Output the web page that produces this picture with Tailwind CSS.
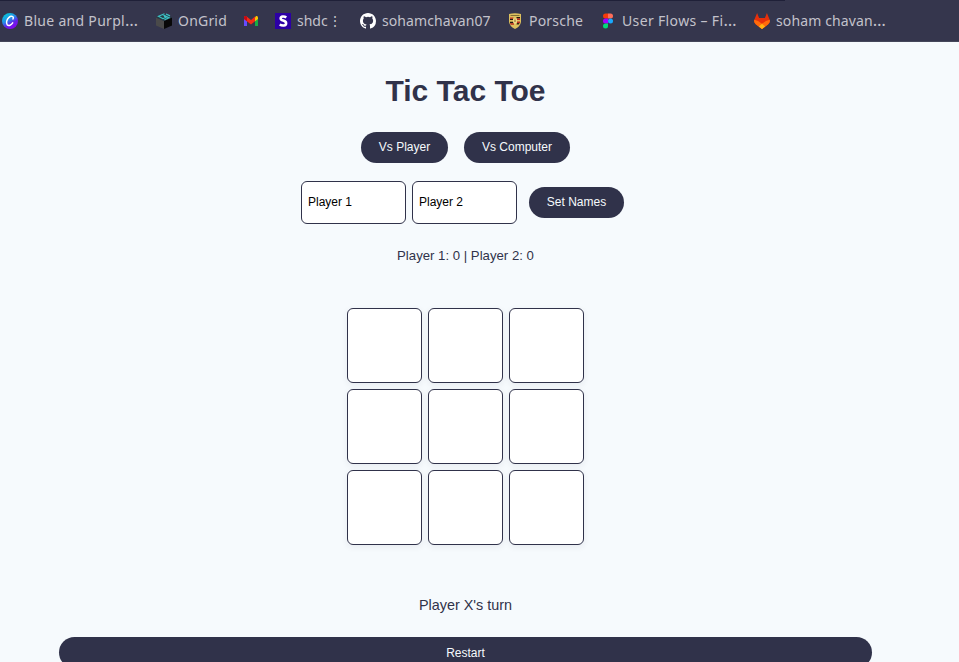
<!DOCTYPE html>
<html lang="en">
<head>
<meta charset="utf-8">
<title>Tic Tac Toe</title>
<script src="https://cdn.jsdelivr.net/npm/@tailwindcss/browser@4"></script>
</head>
<body class="h-[662px] overflow-hidden bg-[#f6fafd] font-['Liberation_Sans',Arial,sans-serif] text-[#30324a]">
<nav class="relative flex h-[42px] items-center border-b border-[#45475a] bg-[#35364d] pl-[2px] font-['Noto_Sans',sans-serif] text-[14px] leading-5 whitespace-nowrap text-[#c3c2cb]">
  <div class="absolute top-0 left-0 h-px w-[785px] bg-[#1f2038]"></div>
  <a class="flex w-[154px] shrink-0 items-center gap-[6px]">
    <svg class="size-4 shrink-0" viewBox="0 0 16 16"><defs><linearGradient id="cv" x1="0.1" y1="0" x2="0.7" y2="1"><stop offset="0" stop-color="#00d5d2"/><stop offset=".45" stop-color="#258bea"/><stop offset=".7" stop-color="#6420e8"/><stop offset="1" stop-color="#8b00f4"/></linearGradient></defs><circle cx="8" cy="8" r="8" fill="url(#cv)"/><path d="M11 6C12.300 3.200 9 2.400 7 4.400 4.600 6.500 3.900 10 5.200 11.700c1.400 1.600 4.200.3 5.500-1.800" fill="none" stroke="#fff" stroke-width="1.500" stroke-linecap="round"/></svg>
    <span class="tracking-[0.3px]">Blue and Purpl<span class="tracking-[1px] text-[16.500px]">…</span></span>
  </a>
  <a class="flex w-[87px] shrink-0 items-center gap-[6px]">
    <svg class="size-4 shrink-0" viewBox="0 0 16 16"><path d="M0 4.500 8 8v8L0 12.500z" fill="#4a4a4a"/><path d="m16 4.500-8 3.500v8l8-3.500z" fill="#080808"/><path d="M0 4.500 8 1l8 3.500L8 8z" fill="#263b43"/><path d="M8.500.8 2.500 3.300 7 5.700l3-1.400-2-1M7 1.800l6 2.900-4.500 2M10 1l4 1.900" fill="none" stroke="#3cc3c6" stroke-width="1.200"/></svg>
    <span class="tracking-[0.2px]">OnGrid</span>
  </a>
  <a class="flex w-8 shrink-0 items-center">
    <svg class="size-4 shrink-0" viewBox="0 0 16 16"><path d="M1 5v8h3V7z" fill="#654cff"/><path d="M12 7v6h3V5z" fill="#18ad45"/><path d="M12 4.500 13 3q2-.5 2 1.500V6l-3 2.300z" fill="#ffc400"/><path d="M1 4.500Q1 2.500 3 3l5 4 4-3.500v4.800L8 11.400 1 6z" fill="#f42b16"/><path d="M1 4.500Q1 2.500 3 3l1 .8v4.500L1 6z" fill="#c90812"/></svg>
  </a>
  <a class="flex w-[85px] shrink-0 items-center gap-[6px]">
    <svg class="size-4 shrink-0" viewBox="0 0 16 16"><path d="M0 0h16v16H0z" fill="#2c00a5"/><path d="M11.300 4.500C9.500 3.200 5.700 3 5.700 5.400c0 2.800 5.400 1.600 5.400 4.800 0 3-4.200 2.700-6.400 1.300" fill="none" stroke="#fff" stroke-width="2.600"/></svg>
    <span class="[word-spacing:-3px]">shdc ⋮</span>
  </a>
  <a class="flex w-[147px] shrink-0 items-center gap-[6px]">
    <svg class="size-4 shrink-0" viewBox="0 0 16 16"><path fill="#fff" d="M8 0C3.580 0 0 3.580 0 8c0 3.540 2.290 6.530 5.470 7.590.4.070.55-.17.55-.38 0-.19-.01-.82-.01-1.490-2.010.37-2.530-.49-2.690-.94-.09-.23-.48-.94-.82-1.130-.28-.15-.68-.52-.01-.53.63-.01 1.080.58 1.230.82.72 1.210 1.870.87 2.330.66.07-.52.28-.87.51-1.070-1.780-.2-3.640-.89-3.640-3.950 0-.87.31-1.590.82-2.150-.08-.2-.36-1.020.08-2.120 0 0 .67-.21 2.200.82a7.600 7.600 0 0 1 4 0c1.530-1.040 2.200-.82 2.200-.82.44 1.100.16 1.920.08 2.120.51.56.82 1.270.82 2.150 0 3.070-1.870 3.750-3.650 3.950.29.25.54.73.54 1.480 0 1.070-.01 1.930-.01 2.200 0 .21.15.46.55.38A8.010 8.010 0 0 0 16 8c0-4.420-3.580-8-8-8z"/></svg>
    <span class="tracking-[0.08px]">sohamchavan07</span>
  </a>
  <a class="flex w-[93px] shrink-0 items-center gap-[6px]">
    <svg class="size-4 shrink-0" viewBox="0 0 16 16"><path d="M2 1q6-1.500 12 0v8q-1 5-6 7-5-2-6-7z" fill="#dcc05e"/><path d="M9.500 4H13v1.500H9.500zM3 8.800h3.500v1.400H3zm0-3h3V7H3z" fill="#1d1812"/><path d="M9.500 5.500H13V7H9.500zM3 10.200h4v1.500H3.700zM3 4.400h3.500v1.400H3zM10 8.500h3V10h-3z" fill="#be2b20"/><path d="M6 5.500h4V9q-.5 1.500-2 2-1.500-.5-2-2z" fill="#efd886"/><path d="M7.500 6.500h1v2.500h-1z" fill="#806329"/><path d="M3.500 2h9v.7h-9z" fill="#594923"/><path d="M10 10h2.600l-.8 1.500H9.500z" fill="#302614"/></svg>
    <span class="tracking-[0.2px]">Porsche</span>
  </a>
  <a class="flex w-[154px] shrink-0 items-center gap-[6px]">
    <svg class="size-4 shrink-0" viewBox="0 0 16 16"><path d="M8 .5v5H5.500a2.500 2.500 0 0 1 0-5z" fill="#f53b09"/><path d="M8 .5h2.500a2.500 2.500 0 0 1 0 5H8z" fill="#ff6d59"/><path d="M8 5.500v5H5.500a2.500 2.500 0 0 1 0-5z" fill="#a100ff"/><circle cx="10.500" cy="8" r="2.500" fill="#18a9ff"/><path d="M8 10.500V13a2.500 2.500 0 1 1-2.500-2.500z" fill="#00dc78"/></svg>
    <span class="tracking-[0.35px]">User Flows – Fi<span class="tracking-[1px] text-[16.500px]">…</span></span>
  </a>
  <a class="flex shrink-0 items-center gap-[6px]">
    <svg class="size-4 shrink-0" viewBox="0 0 16 16"><path d="M3.100 0 .3 6.700Q-.6 9.500 2 11.500L8 16l6-4.500q2.600-2 1.700-4.800L12.900 0l-2 5H5.100z" fill="#e62f0b"/><path d="M.3 6.700q3.700.5 7.700 4 4-3.500 7.700-4 .9 2.800-1.700 4.800L8 16l-6-4.500Q-.6 9.500.3 6.700z" fill="#ff6b0b"/><path d="m8 10.700 3.200 2.800L8 16l-3.200-2.500z" fill="#ffb412"/></svg>
    <span class="tracking-[0.12px]">soham chavan<span class="tracking-[1px] text-[16.500px]">…</span></span>
  </a>
</nav>
<main class="ml-[59px] flex w-[813px] flex-col items-center">
  <h1 class="mt-8 text-[30px] leading-[34px] font-bold">Tic Tac Toe</h1>
  <div class="mt-6 flex gap-4 text-[12px] text-[#f6fafd]">
    <button class="h-[31px] w-[87px] rounded-full bg-[#30324a] pb-[2px]">Vs Player</button>
    <button class="h-[31px] w-[106px] rounded-full bg-[#30324a] pb-[2px]">Vs Computer</button>
  </div>
  <div class="mt-[18px] mr-[6px] flex items-center text-[12px]">
    <input class="h-[43px] w-[105px] rounded-[6px] border border-[#30324a] bg-white px-[6px] pb-[2px] text-black" value="Player 1">
    <input class="ml-[6px] h-[43px] w-[105px] rounded-[6px] border border-[#30324a] bg-white px-[6px] pb-[2px] text-black" value="Player 2">
    <button class="ml-3 h-[31px] w-[95px] rounded-full bg-[#30324a] pb-[2px] text-[#f6fafd]">Set Names</button>
  </div>
  <p class="mt-6 text-[13.200px] leading-4">Player 1: 0 | Player 2: 0</p>
  <div class="mt-11 grid grid-cols-3 gap-[6px]">
    <button class="size-[75px] rounded-[6px] border border-[#30324a] bg-white shadow-[0_2px_6px_rgba(48,50,74,0.08)]"></button>
    <button class="size-[75px] rounded-[6px] border border-[#30324a] bg-white shadow-[0_2px_6px_rgba(48,50,74,0.08)]"></button>
    <button class="size-[75px] rounded-[6px] border border-[#30324a] bg-white shadow-[0_2px_6px_rgba(48,50,74,0.08)]"></button>
    <button class="size-[75px] rounded-[6px] border border-[#30324a] bg-white shadow-[0_2px_6px_rgba(48,50,74,0.08)]"></button>
    <button class="size-[75px] rounded-[6px] border border-[#30324a] bg-white shadow-[0_2px_6px_rgba(48,50,74,0.08)]"></button>
    <button class="size-[75px] rounded-[6px] border border-[#30324a] bg-white shadow-[0_2px_6px_rgba(48,50,74,0.08)]"></button>
    <button class="size-[75px] rounded-[6px] border border-[#30324a] bg-white shadow-[0_2px_6px_rgba(48,50,74,0.08)]"></button>
    <button class="size-[75px] rounded-[6px] border border-[#30324a] bg-white shadow-[0_2px_6px_rgba(48,50,74,0.08)]"></button>
    <button class="size-[75px] rounded-[6px] border border-[#30324a] bg-white shadow-[0_2px_6px_rgba(48,50,74,0.08)]"></button>
  </div>
  <p class="mt-[51px] text-[14.400px] leading-[18px]">Player X's turn</p>
  <button class="mt-[23px] h-[31px] w-full rounded-full bg-[#30324a] text-[12px] text-[#f6fafd]">Restart</button>
</main>
</body>
</html>
